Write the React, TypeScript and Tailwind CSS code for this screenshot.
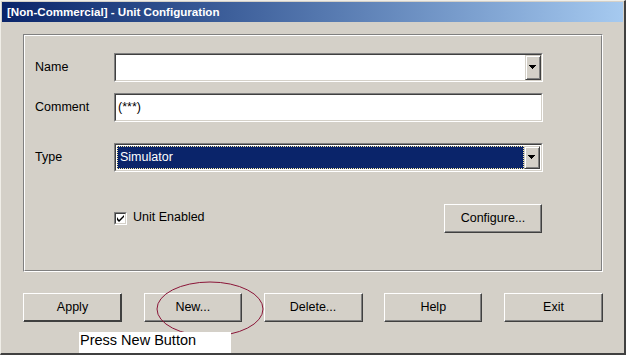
import React from 'react'

const font = { fontFamily: '"Liberation Sans", Arial, sans-serif' }

function Sunken({ className = '', children }: { className?: string; children?: React.ReactNode }) {
  return (
    <div className={`border border-t-[#808080] border-l-[#808080] border-r-white border-b-white ${className}`}>
      <div className="h-full w-full border border-t-[#404040] border-l-[#404040] border-r-[#d4d0c8] border-b-[#d4d0c8] bg-white">
        {children}
      </div>
    </div>
  )
}

function DropButton() {
  return (
    <div className="flex h-full w-[16px] items-center justify-center border border-t-[#d4d0c8] border-l-[#d4d0c8] border-r-[#404040] border-b-[#404040] bg-[#d4d0c8] shadow-[inset_1px_1px_0_#ffffff,inset_-1px_-1px_0_#808080]">
      <svg width="8" height="5" viewBox="0 0 8 5">
        <path d="M0 0h7v1h-1v1h-1v1h-1v1h-1v-1h-1v-1h-1v-1h-1z" fill="#000" />
      </svg>
    </div>
  )
}

function Button({ label, w = 'w-[99px]', dflt = false }: { label: string; w?: string; dflt?: boolean }) {
  return (
    <div
      className={`flex h-[29px] ${w} items-center justify-center border border-t-white border-l-white ${
        dflt ? 'border-r-[#404040] border-b-[#404040] shadow-[inset_-1px_-1px_0_#404040]' : 'border-r-[#404040] border-b-[#404040] shadow-[inset_-1px_-1px_0_#808080]'
      } bg-[#d4d0c8] text-[12.5px] text-black`}
    >
      {label}
    </div>
  )
}

export default function App() {
  return (
    <div
      style={font}
      className="relative flex h-[355px] w-[626px] flex-col overflow-hidden border-l border-t border-r-2 border-b-2 border-l-[#f0eee8] border-t-[#f0eee8] border-r-[#404040] border-b-[#404040] bg-[#d4d0c8]"
    >
      {/* TITLE */}
      <div className="mx-px mt-px flex h-[20px] items-center bg-gradient-to-r from-[#0a246a] to-[#a6caf0] pl-[5px] text-[11.6px] font-bold text-white">
        [Non-Commercial] - Unit Configuration
      </div>

      {/* GROUP */}
      <div className="ml-[22px] mt-[12px] h-[238px] w-[580px] border border-t-[#808080] border-l-[#808080] border-r-white border-b-white">
        <div className="flex h-full w-full flex-col border border-t-white border-l-white border-r-[#808080] border-b-[#808080] pl-[10px] pt-[17px] text-[12.5px] text-black">
          <div className="flex h-[29px] items-center">
            <span className="w-[79px] -mt-px">Name</span>
            <Sunken className="h-[29px] w-[429px]">
              <div className="flex h-full justify-end">
                <DropButton />
              </div>
            </Sunken>
          </div>

          <div className="mt-[11px] flex h-[29px] items-center">
            <span className="w-[79px] -mt-px">Comment</span>
            <Sunken className="h-[29px] w-[429px]">
              <div className="flex h-full items-center pl-[2px]">(***)</div>
            </Sunken>
          </div>

          <div className="mt-[21px] flex h-[29px] items-center">
            <span className="w-[79px] -mt-px">Type</span>
            <Sunken className="h-[29px] w-[429px]">
              <div className="flex h-full p-px">
                <div className="flex flex-1 items-center border border-dotted border-[#f8e8a0] bg-[#0a246a] pl-[2px] text-white">
                  Simulator
                </div>
                <DropButton />
              </div>
            </Sunken>
          </div>

          <div className="mt-[32px] flex h-[28px] items-center">
            <span className="w-[79px]" />
            <div className="flex h-[13px] w-[13px] items-center justify-center border border-t-[#808080] border-l-[#808080] border-r-white border-b-white">
              <div className="flex h-full w-full items-center justify-center border border-t-[#404040] border-l-[#404040] border-r-[#d4d0c8] border-b-[#d4d0c8] bg-white">
                <svg width="7" height="7" viewBox="0 0 7 7">
                  <path d="M0 2v3l2 2 5-5v-2l-5 5z" fill="#000" />
                </svg>
              </div>
            </div>
            <span className="ml-[6px] -mt-px">Unit Enabled</span>
            <div className="ml-auto mr-[59px]">
              <Button label="Configure..." w="w-[98px]" />
            </div>
          </div>
        </div>
      </div>

      {/* BUTTONS */}
      <div className="ml-[22px] mt-[21px] flex w-[580px] justify-between">
        <Button label="Apply" dflt />
        <Button label="New..." w="w-[98px]" />
        <Button label="Delete..." />
        <Button label="Help" w="w-[98px]" />
        <Button label="Exit" />
      </div>

      {/* ANNOTATION */}
      <svg className="pointer-events-none absolute left-[154px] top-[279px]" width="110" height="58" viewBox="0 0 110 58">
        <ellipse cx="55" cy="29" rx="53" ry="27" fill="none" stroke="#8b1538" strokeWidth="1" />
      </svg>
      <div className="absolute left-[78px] top-[331px] h-[24px] w-[152px] bg-white pl-px text-[14.5px] leading-[17px] text-black">
        Press New Button
      </div>
    </div>
  )
}
